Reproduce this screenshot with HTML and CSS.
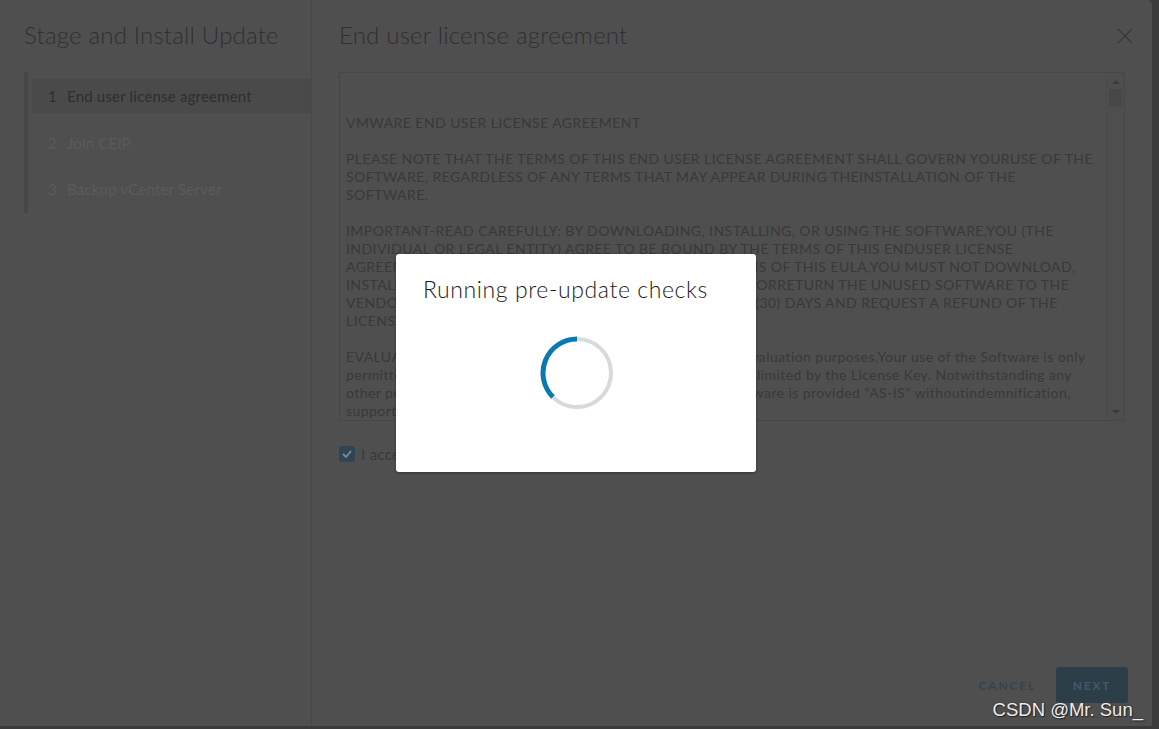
FILE: index.html
```html
<!DOCTYPE html>
<html lang="en">
<head>
<meta charset="utf-8">
<title>Stage and Install Update</title>
<link rel="stylesheet" href="styles.css">
</head>
<body>
<div class="page">
  <div class="wizard">
    <aside class="side">
      <h1 class="side-title">Stage and Install Update</h1>
      <nav class="steps">
        <div class="step active"><span class="step-num">1</span><span>End user license agreement</span></div>
        <div class="step"><span class="step-num">2</span><span>Join CEIP</span></div>
        <div class="step"><span class="step-num">3</span><span>Backup vCenter Server</span></div>
      </nav>
    </aside>
    <main class="content">
      <header class="content-head">
        <h2 class="content-title">End user license agreement</h2>
        <button class="close" aria-label="Close">
          <svg width="16" height="16" viewBox="0 0 16 16"><path d="M1 1 L15 15 M15 1 L1 15" stroke="#393939" stroke-width="1.3" fill="none"/></svg>
        </button>
      </header>
      <div class="eula">
        <div class="eula-text">
          <p>VMWARE END USER LICENSE AGREEMENT</p>
          <p>PLEASE NOTE THAT THE TERMS OF THIS END USER LICENSE AGREEMENT SHALL GOVERN YOURUSE OF THE<br>SOFTWARE, REGARDLESS OF ANY TERMS THAT MAY APPEAR DURING THEINSTALLATION OF THE<br>SOFTWARE.</p>
          <p>IMPORTANT-READ CAREFULLY: BY DOWNLOADING, INSTALLING, OR USING THE SOFTWARE,YOU (THE<br>INDIVIDUAL OR LEGAL ENTITY) AGREE TO BE BOUND BY THE TERMS OF THIS ENDUSER LICENSE<br>AGREEMENT ("EULA"). IF YOU DO NOT AGREE TO THE TERMS OF THIS EULA,YOU MUST NOT DOWNLOAD,<br>INSTALL, OR USE THE SOFTWARE, AND YOU MUST DELETE ORRETURN THE UNUSED SOFTWARE TO THE<br>VENDOR FROM WHICH YOU ACQUIRED IT WITHIN THIRTY (30) DAYS AND REQUEST A REFUND OF THE<br>LICENSE FEE, IF ANY, THAT YOU PAID FOR THE SOFTWARE.</p>
          <p>EVALUATION LICENSE. If You are licensing the Software for evaluation purposes,Your use of the Software is only<br>permitted in a non-production environment and for the period limited by the License Key. Notwithstanding any<br>other provision in this EULA, an Evaluation License of the Software is provided "AS-IS" withoutindemnification,<br>support or warranty of any kind, expressed or implied.</p>
        </div>
        <div class="scrollbar">
          <span class="arrow up"></span>
          <span class="thumb"></span>
          <span class="track-fill"></span>
          <span class="arrow down"></span>
        </div>
      </div>
      <label class="accept">
        <span class="checkbox">
          <svg width="10" height="8" viewBox="0 0 10 8"><path d="M1 4 L4 7 L9 1" stroke="#7d8b94" stroke-width="1.8" fill="none"/></svg>
        </span>
        <span>I accept the terms of the license agreement.</span>
      </label>
      <footer class="actions">
        <button class="btn-link">CANCEL</button>
        <button class="btn-primary">NEXT</button>
      </footer>
    </main>
  </div>
  <div class="bottom-edge"></div>
</div>

<div class="dialog" role="dialog">
  <h3 class="dialog-title">Running pre-update checks</h3>
  <div class="spinner">
    <svg width="74" height="74" viewBox="0 0 74 74">
      <circle cx="37" cy="37" r="34" stroke="#d9d9d9" stroke-width="4" fill="none"/>
      <path d="M37 3 A34 34 0 0 0 12.96 61.04" stroke="#0a79b0" stroke-width="5" fill="none"/>
    </svg>
  </div>
</div>

<div class="watermark">CSDN @Mr. Sun_</div>
</body>
</html>
```

FILE: styles.css
```css
* { box-sizing: border-box; }

html, body {
  margin: 0;
  padding: 0;
  width: 1159px;
  height: 729px;
  overflow: hidden;
  background: #3b3b3b;
  font-family: "Lato", "Open Sans", sans-serif;
}

.page {
  width: 1159px;
  height: 729px;
  display: flex;
  flex-direction: column;
}

.wizard {
  width: 1152px;
  height: 726px;
  background: #4f4f4f;
  border-top-right-radius: 5px;
  display: flex;
}

.bottom-edge {
  flex: 1;
}

/* ---------- side ---------- */
.side {
  width: 312px;
  border-right: 1px solid #474747;
  padding: 0 0 0 24px;
}

.side-title {
  margin: 0;
  padding-top: 20px;
  height: 72px;
  font-size: 24px;
  line-height: 30px;
  font-weight: 300;
  color: #303030;
  letter-spacing: 0.2px;
}

.steps {
  border-left: 4px solid #474747;
  padding: 7px 0 7px 4px;
  display: flex;
  flex-direction: column;
  gap: 12.5px;
}

.step {
  height: 34px;
  display: flex;
  align-items: center;
  padding-left: 16px;
  font-size: 15px;
  letter-spacing: 0.2px;
  color: #5b5b5b;
}

.step.active {
  background: #4a4a4a;
  color: #2e2e2e;
}

.step-num {
  width: 19px;
}

/* ---------- content ---------- */
.content {
  flex: 1;
  display: flex;
  flex-direction: column;
  padding: 0 24px 23px 27px;
}

.content-head {
  height: 72px;
  display: flex;
  align-items: flex-start;
  justify-content: space-between;
}

.content-title {
  margin: 0;
  padding-top: 20px;
  font-size: 24px;
  line-height: 30px;
  font-weight: 300;
  color: #303030;
  letter-spacing: 0.2px;
}

.close {
  margin-top: 28px;
  margin-right: -5px;
  padding: 0;
  border: 0;
  background: none;
  width: 16px;
  height: 16px;
}

.eula {
  width: 786px;
  height: 349px;
  border: 1px solid #474747;
  display: flex;
  overflow: hidden;
}

.eula-text {
  flex: 1;
  padding: 41px 0 0 6px;
  font-size: 14px;
  letter-spacing: 0.44px;
  line-height: 18px;
  color: #393939;
  white-space: nowrap;
  overflow: hidden;
}

.eula-text p {
  margin: 0 0 18px;
}

.scrollbar {
  width: 18px;
  border-left: 1px solid #4b4b4b;
  background: #4e4e4e;
  display: flex;
  flex-direction: column;
  align-items: center;
  padding: 7px 0 6px;
}

.arrow {
  width: 0;
  height: 0;
  border-left: 4px solid transparent;
  border-right: 4px solid transparent;
}

.arrow.up { border-bottom: 4px solid #3a3a3a; }
.arrow.down { border-top: 4px solid #3a3a3a; }

.thumb {
  margin-top: 5px;
  width: 13px;
  height: 17px;
  background: #474747;
}

.track-fill { flex: 1; }

.accept {
  margin-top: 24px;
  display: flex;
  align-items: center;
  gap: 6px;
  font-size: 15px;
  letter-spacing: 0.3px;
  color: #3a3a3a;
}

.checkbox {
  width: 16px;
  height: 16px;
  border-radius: 3px;
  background: #2e4556;
  display: flex;
  align-items: center;
  justify-content: center;
}

.actions {
  margin-top: auto;
  display: flex;
  justify-content: flex-end;
  align-items: center;
  gap: 20px;
}

.btn-link, .btn-primary {
  font-family: "Lato", "Open Sans", sans-serif;
  font-size: 12px;
  font-weight: 700;
  letter-spacing: 1.8px;
  border: 0;
  cursor: pointer;
}

.btn-link {
  background: none;
  color: #33454f;
  padding: 0;
}

.btn-primary {
  width: 72px;
  height: 36px;
  border-radius: 3px;
  background: #2c3e48;
  color: #415a69;
}

/* ---------- overlay dialog ---------- */
.dialog {
  position: absolute;
  left: 396px;
  top: 254px;
  width: 360px;
  height: 218px;
  background: #ffffff;
  border-radius: 3px;
  box-shadow: 0 1px 3px rgba(0, 0, 0, 0.35);
  padding: 21px 27px 0;
}

.dialog-title {
  margin: 0;
  font-size: 23px;
  line-height: 29px;
  font-weight: 300;
  color: #1b1b1b;
  letter-spacing: 0.6px;
}

.spinner {
  margin-top: 32px;
  display: flex;
  justify-content: center;
  padding-left: 1px;
}

.watermark {
  position: absolute;
  right: 16px;
  bottom: 8px;
  font-family: "Liberation Sans", Arial, sans-serif;
  font-size: 18.5px;
  color: #ececec;
  text-shadow: 1px 1px 1px #222, 0 0 2px #333;
}
```
